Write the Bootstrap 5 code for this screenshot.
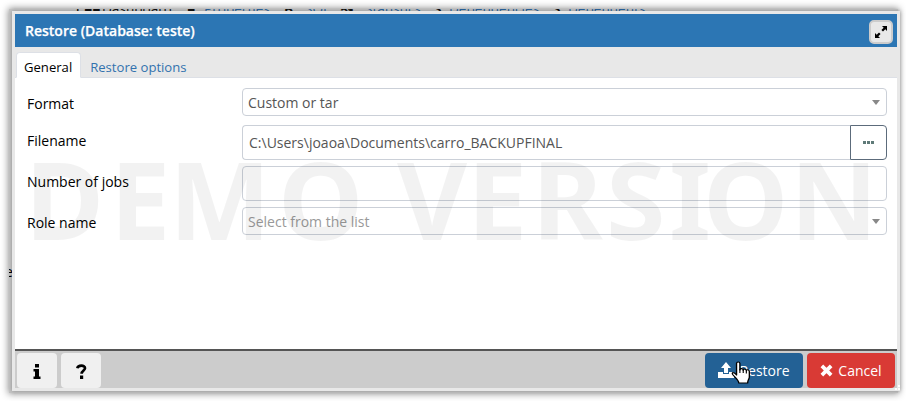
<!DOCTYPE html>
<html lang="en">
<head>
<meta charset="utf-8">
<title>Restore</title>
<link rel="stylesheet" href="https://cdn.jsdelivr.net/npm/bootstrap@5.3.0/dist/css/bootstrap.min.css">
<style>
body{font-family:"Open Sans","Noto Sans",sans-serif;font-size:14px;line-height:20px;color:#000;background:#fff;width:906px;height:401px;overflow:hidden}
.backdrop-sheet{margin:9px 0 0 9px;width:889px;height:384px;background:#c6c6c6;box-shadow:0 0 7px 1px rgba(0,0,0,.4);padding:2px 0 0 3px;position:relative}
.behind{position:absolute;left:0;top:0;width:100%;height:2px;overflow:hidden;color:#2c66a0;white-space:nowrap;font-size:13.6px}
.behind span{position:absolute;top:-10px}
.behind b{color:#111}
.behind-e{position:absolute;left:0;top:253px;width:3px;overflow:hidden;text-indent:-4px}
.dlg{position:relative;width:888px;height:380px;background:#e8e8e8;padding:3px;box-shadow:0 0 4px rgba(0,0,0,.3)}
.dlg-head{height:33px;background:#2c76b4;color:#fff;font-weight:600;-webkit-text-stroke:.25px #fff;padding:0 4px 0 10px}
.max-btn{width:24px;height:24px;border:2px solid #ccc;border-radius:5px;background:#e8e8e8;padding:0;margin-top:3px}
.tabs{height:31px;background:#e8e8e8;border-bottom:1px solid #dde0e6;padding:5px 0 0 1px;font-size:13.1px}
.tabs .nav-link{padding:4px 8px 0 7px;height:26px;border:1px solid transparent;border-radius:4px 4px 0 0;color:#3272ae}
.tabs .nav-link + .nav-link{padding-left:8px}
.tabs .nav-link.active{background:#fff;color:#000;border-color:#dde0e6 #dde0e6 #fff}
.pane{height:271px;background:#fff;padding:10px 10px 0 12px}
.frow{margin-bottom:6px}
.frow:first-child{margin-bottom:9px}
.lbl{width:215px;padding-top:6px}
.box{border:1px solid #cbd0d8;border-radius:4px;background:#fff;color:#555;height:35px;padding:0 6px}
.sel{height:28px;padding:0 6px 0 5px}
.sel span{padding-top:1px}
.pick{color:#999}
.caret{width:0;height:0;border:4px solid transparent;border-top:5px solid #888;border-bottom:0}
.dots{width:37px;height:35px;border:1px solid #5c6b7b;border-radius:0 4px 4px 0;background:#fff;padding:0}
.foot{height:39px;background:#ccc;border-top:2px solid #555;padding:2px 2px 0}
.foot .btn{height:35px;border:0;border-radius:4px;font-size:14px;line-height:20px;padding:0}
.foot .btn svg + span{margin-left:5px}
.b-sq{width:40px;background:#f0f0f0!important}
.b-res{width:98px;background:#236195!important;color:#fff!important}
.b-can{width:88px;background:#d93a35!important;color:#fff!important}
.demo{position:absolute;left:-12px;top:-11px;pointer-events:none;font-family:"Noto Sans","Open Sans",sans-serif;font-size:108px;font-weight:700}
.hand{position:absolute;left:719px;top:350px}
.grip{position:absolute;right:0;bottom:1px}
</style>
</head>
<body>
<div class="backdrop-sheet">
  <div class="behind">
    <span style="left:65px"><b>|</b></span><span style="left:75px"><b>&#9632;&#9632;</b></span><span style="left:93px"><b class="fw-normal">Dashboard</b></span>
    <span style="left:178px"><b>&#9632;</b></span><span style="left:195px">Properties</span><span style="left:275px"><b>B</b></span><span style="left:296px">SQL</span>
    <span style="left:332px"><b>&#8605;</b></span><span style="left:356px">Statistics</span><span style="left:425px"><b>S</b></span><span style="left:440px">Dependencies</span>
    <span style="left:544px"><b>S</b></span><span style="left:559px">Dependents</span>
  </div>
  <div class="behind-e">e</div>
  <main class="dlg">
    <header class="dlg-head d-flex justify-content-between align-items-center">
      <span>Restore (Database: teste)</span>
      <button class="max-btn d-flex align-items-center justify-content-center" aria-label="Maximize">
        <svg width="14" height="14" viewBox="0 0 14 14"><path d="M8 1h5v5l-1.700-1.700-2.300 2.300-1.600-1.600 2.300-2.300zM6 13H1V8l1.700 1.700 2.300-2.300 1.600 1.600-2.300 2.300z"/></svg>
      </button>
    </header>
    <nav class="tabs nav flex-nowrap">
      <a class="nav-link active" href="#">General</a>
      <a class="nav-link" href="#">Restore options</a>
    </nav>
    <section class="pane">
      <div class="frow d-flex"><label class="lbl">Format</label><div class="box sel flex-fill d-flex align-items-center justify-content-between"><span>Custom or tar</span><i class="caret"></i></div></div>
      <div class="frow d-flex"><label class="lbl">Filename</label><div class="box flex-fill d-flex align-items-center rounded-end-0 border-end-0">C:\Users\joaoa\Documents\carro_BACKUPFINAL</div><button class="dots d-flex align-items-center justify-content-center" aria-label="Browse"><svg width="11" height="3"><path fill="#5f7a78" d="M0 0h3v3H0zM4 0h3v3H4zM8 0h3v3H8z"/></svg></button></div>
      <div class="frow d-flex"><label class="lbl">Number of jobs</label><div class="box flex-fill"></div></div>
      <div class="frow d-flex"><label class="lbl">Role name</label><div class="box sel flex-fill d-flex align-items-center justify-content-between"><span class="pick">Select from the list</span><i class="caret"></i></div></div>
    </section>
    <footer class="foot d-flex">
      <button class="btn b-sq me-1" aria-label="Info"><svg width="8" height="15" viewBox="0 0 8 15"><path d="M2 0h4v3.500H2zM.5 5H6v7.500h1.500V15H.5v-2.500H2v-5H.5z"/></svg></button>
      <button class="btn b-sq" aria-label="Help"><svg width="11" height="15" viewBox="0 0 11 15"><path fill="none" stroke="#000" stroke-width="2.700" d="M1.300 4.300C2 .700 9.200.700 9 4.300 8.900 6.500 5.700 6.500 5.600 9.800"/><path d="M4 11.500h3.200V15H4z"/></svg></button>
      <button class="btn b-res ms-auto me-1 d-flex align-items-center justify-content-center"><svg width="16" height="17" viewBox="0 0 16 17"><path fill="#fff" d="M8 0l5 6h-3v5H6V6H3zM0 10h5v2h6v-2h5v6H0z"/></svg><span>Restore</span></button>
      <button class="btn b-can d-flex align-items-center justify-content-center"><svg width="13" height="13" viewBox="0 0 14 14"><path stroke="#fff" stroke-width="4" d="M2 2l10 10M12 2L2 12"/></svg><span>Cancel</span></button>
    </footer>
    <svg class="demo" width="906" height="300"><text y="240" x="25 110 169 278 368 397 467 532 606 669 703 790" fill="#000" fill-opacity=".05">DEMO VERSION</text></svg>
    <svg class="hand" width="20" height="24" viewBox="0 0 18 24" preserveAspectRatio="none"><path fill="#fff" stroke="#000" stroke-width="1.200" stroke-linejoin="round" d="M5 14V2.500C5 .5 8 .5 8 2.500V9c0-2 3-1.700 3 .3 0-1.800 2.800-1.500 2.800.5 0-1.700 2.700-1.300 2.700.7V16c0 2-1.500 3-1.500 6H7c0-2.500-3-5-5.500-8.500C.3 11.500 2.500 10.500 5 14z"/><path stroke="#000" d="M8 8v4M11 9v3M13.800 10v2.500"/></svg>
    <svg class="grip" width="5" height="5"><path fill="#fff" d="M3 0h2v2H3zM0 3h2v2H0zM3 3h2v2H3z"/></svg>
  </main>
</div>
<script src="https://cdn.jsdelivr.net/npm/bootstrap@5.3.0/dist/js/bootstrap.bundle.min.js"></script>
</body>
</html>
